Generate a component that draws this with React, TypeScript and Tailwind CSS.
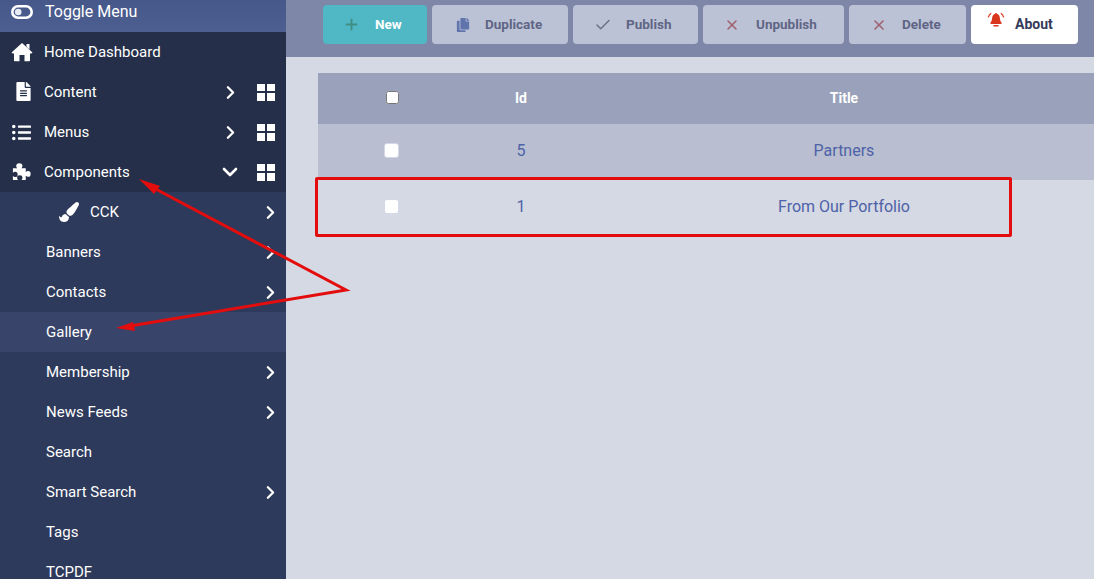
import { FaFileAlt, FaListUl, FaPaintBrush, FaCopy } from "react-icons/fa";
import { ChevronDown, ChevronRight, Plus, Check, X } from "lucide-react";
import type { ReactNode } from "react";

function Chev() {
  return <ChevronRight size={21} strokeWidth={2.6} className="text-white" />;
}

function Grid() {
  return (
    <span className="grid grid-cols-2 gap-[2px] w-[18px] h-[17px]">
      <i className="bg-white" />
      <i className="bg-white" />
      <i className="bg-white" />
      <i className="bg-white" />
    </span>
  );
}

function HomeIcon() {
  return (
    <svg width="22" height="20" viewBox="0 0 22 20" fill="#fff">
      <path d="M11 1 L21.500 10.500 L20.500 11.500 H19 V18.500 a.8 .8 0 0 1-.8 .8 H13.500 V13 H8.500 V19.300 H3.800 a.8 .8 0 0 1-.8-.8 V11.500 H1.500 L.5 10.500 Z" />
      <path d="M15.500 2 H18.500 V7.500 L15.500 4.800 Z" />
    </svg>
  );
}

function PuzzleIcon() {
  return (
    <svg width="20" height="20" viewBox="0 0 21 20" fill="#fff">
      <path d="M2 6h4.500c-1-1-1-2-1-2.500a3 2.600 0 0 1 6.500 0c0 .6-.2 1.500-1 2.500h4.500v4c1-.8 1.800-1 2.500-1a2.600 3 0 0 1 0 6c-.7 0-1.500-.2-2.500-1v4.500h-4.500c.8-1 1-1.800 1-2.500a2.800 2.600 0 0 0-5.600 0c0 .7.2 1.500 1 2.500H2v-4.200c1 .8 1.800 1 2.400 1a2.600 2.800 0 0 0 0-5.600c-.6 0-1.400.2-2.400 1z" />
    </svg>
  );
}

function TopRow({ icon, label, open, grid = true }: { icon: ReactNode; label: string; open?: boolean; grid?: boolean }) {
  return (
    <div className="h-10 shrink-0 flex items-center bg-[#252f49] text-white text-[15px]">
      <span className="w-[44px] pl-[11px] flex items-center text-white">{icon}</span>
      <span className="flex-1 leading-none">{label}</span>
      {grid && (
        <>
          <span className="w-[24px] flex justify-center">
            {open ? <ChevronDown size={24} strokeWidth={2.6} /> : <Chev />}
          </span>
          <span className="ml-[15px] mr-[11px]">
            <Grid />
          </span>
        </>
      )}
    </div>
  );
}

function SubRow({ label, arrow, active }: { label: string; arrow?: boolean; active?: boolean }) {
  return (
    <div className={"h-10 shrink-0 flex items-center pl-[46px] pr-[5px] text-white text-[15px] " + (active ? "bg-[#38446a]" : "bg-[#2e3a5b]")}>
      <span className="flex-1 leading-none">{label}</span>
      {arrow && <Chev />}
    </div>
  );
}

function Btn({ icon, label, w, gap, pl, variant }: { icon: ReactNode; label: string; w: string; gap: string; pl: string; variant?: "new" | "about" }) {
  const bg = variant === "new" ? "bg-[#50b7c4] text-white text-[13.5px]" : variant === "about" ? "bg-white text-[#33395a] text-[14px]" : "bg-[#bcc2d5] text-[#5f6585] text-[13.5px]";
  return (
    <div className={`h-[39px] rounded flex items-center font-bold ${bg} ${w} ${pl}`}>
      <span className={`flex ${gap}`}>{icon}</span>
      <span>{label}</span>
    </div>
  );
}

export default function App() {
  return (
    <div className="relative w-[1094px] h-[579px] overflow-hidden flex bg-[#d5d9e3]" style={{ fontFamily: "Roboto, sans-serif" }}>
      <aside className="w-[286px] shrink-0 flex flex-col bg-[#2e3a5b]">
        <div className="h-8 shrink-0 flex items-center bg-gradient-to-b from-[#46588a] to-[#4c5f90] text-white text-[16px]">
          <span className="w-[45px] pl-[11px] -mt-[8px] flex">
            <svg width="22" height="14" viewBox="0 0 22 14">
              <rect x="1.300" y="1.300" width="19.400" height="11.400" rx="5.700" fill="none" stroke="#fff" strokeWidth="2.600" />
              <circle cx="7.200" cy="7" r="3.300" fill="#e8ebf4" />
            </svg>
          </span>
          <span className="leading-none -mt-[9px]">Toggle Menu</span>
        </div>
        <TopRow icon={<HomeIcon />} label="Home Dashboard" grid={false} />
        <TopRow icon={<span className="pl-[3px] -mt-[2px] flex"><FaFileAlt size={19} /></span>} label="Content" />
        <TopRow icon={<span className="pl-[1px] flex"><FaListUl size={19} /></span>} label="Menus" />
        <TopRow icon={<PuzzleIcon />} label="Components" open />
        <div className="h-10 shrink-0 flex items-center pl-[59px] pr-[5px] text-white text-[15px]">
          <FaPaintBrush size={20} />
          <span className="ml-[11px] flex-1 leading-none">CCK</span>
          <Chev />
        </div>
        <SubRow label="Banners" arrow />
        <SubRow label="Contacts" arrow />
        <SubRow label="Gallery" active />
        <SubRow label="Membership" arrow />
        <SubRow label="News Feeds" arrow />
        <SubRow label="Search" />
        <SubRow label="Smart Search" arrow />
        <SubRow label="Tags" />
        <SubRow label="TCPDF" />
      </aside>

      <main className="flex-1 min-w-0 flex flex-col">
        <div className="h-[57px] bg-[#7e87a8] flex items-start pt-[5px] pl-[37px] gap-[5px]">
          <Btn variant="new" w="w-[104px]" pl="pl-[20px]" gap="w-[32px]" icon={<Plus size={17} strokeWidth={2.6} className="text-[#3f8f84]" />} label="New" />
          <Btn w="w-[136px]" pl="pl-[24px]" gap="w-[29px]" icon={<FaCopy size={14} className="text-[#5f73ad]" />} label="Duplicate" />
          <Btn w="w-[125px]" pl="pl-[21px]" gap="w-[32px]" icon={<Check size={18} strokeWidth={2} className="text-[#6a7189]" />} label="Publish" />
          <Btn w="w-[141px]" pl="pl-[21px]" gap="w-[32px]" icon={<X size={16} strokeWidth={2.4} className="text-[#a0626f]" />} label="Unpublish" />
          <Btn w="w-[117px]" pl="pl-[22px]" gap="w-[31px]" icon={<X size={16} strokeWidth={2.4} className="text-[#a0626f]" />} label="Delete" />
          <Btn
            variant="about"
            w="w-[107px]"
            pl="pl-[16px]"
            gap="w-[28px] -mt-[10px]"
            icon={
              <svg width="18" height="15" viewBox="0 0 17 15" fill="#d9371d">
                <path d="M8.500 1a1 1 0 0 1 1 1c2 .5 2.700 2.200 2.900 4.300.1 1.900.7 3.300 1.600 4.200v1.500H3v-1.500c.9-.9 1.500-2.300 1.600-4.200C4.800 4.200 5.500 2.500 7.500 2a1 1 0 0 1 1-1Z" />
                <path d="M6 13h5v1.500H6z" />
                <path d="M3.700 1.300C2.200 2.300 1.200 3.700 .8 5.300" fill="none" stroke="#d9371d" strokeWidth="1.300" />
                <path d="M13.300 1.300C14.800 2.300 15.800 3.700 16.200 5.300" fill="none" stroke="#d9371d" strokeWidth="1.300" />
              </svg>
            }
            label="About"
          />
        </div>

        <div className="pt-4 pl-8">
          <div className="h-[51px] bg-[#9aa1ba] grid grid-cols-[130px_146px_1fr] items-center text-white text-[14px] font-bold">
            <span className="pl-[68px] -mt-[3px] flex"><input type="checkbox" readOnly className="w-[13px] h-[13px]" /></span>
            <span className="text-center">Id</span>
            <span className="text-center">Title</span>
          </div>
          <Row bg="bg-[#b9bed0]" id="5" title="Partners" />
          <Row bg="bg-[#d5d9e3]" id="1" title="From Our Portfolio" />
        </div>
      </main>

      <div className="absolute left-[315px] top-[177px] w-[697px] h-[60px] border-[3px] border-[#e30d0d] rounded-[2px]" />
      <svg className="absolute left-0 top-0 pointer-events-none" width="1094" height="579" viewBox="0 0 1094 579">
        <polyline points="150,186 346,290 130,326" fill="none" stroke="#e30d0d" strokeWidth="3" />
        <polygon points="139,179 160,186 154,194" fill="#e30d0d" />
        <polygon points="116,328 133,322 135,331" fill="#e30d0d" />
      </svg>
    </div>
  );
}

function Row({ bg, id, title }: { bg: string; id: string; title: string }) {
  return (
    <div className={`h-14 grid grid-cols-[130px_146px_1fr] items-center text-[16px] text-[#4d62a8] ${bg}`}>
      <span className="pl-[66px] -mt-[3px] flex"><span className="w-[15px] h-[15px] rounded-[3px] bg-white border border-[#d4d8e6]" /></span>
      <span className="text-center -mt-[2px]">{id}</span>
      <span className="text-center -mt-[2px]">{title}</span>
    </div>
  );
}
